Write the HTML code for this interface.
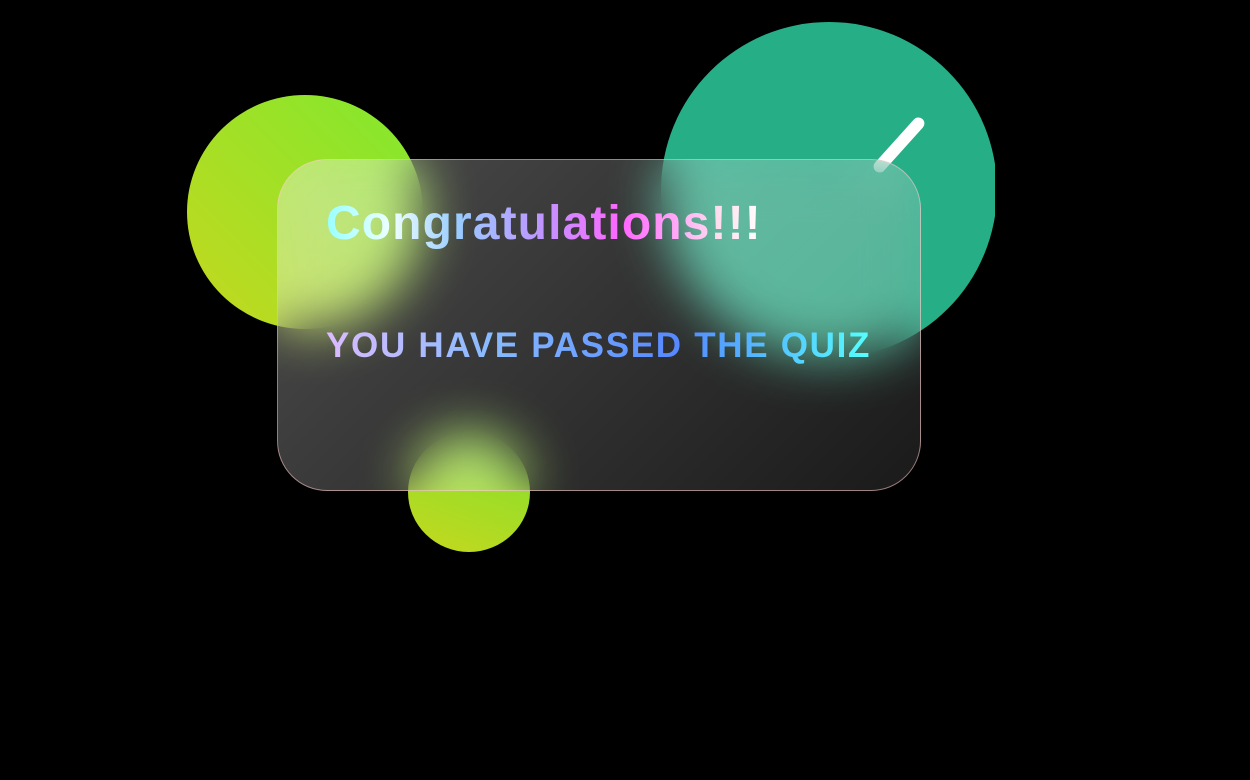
<!DOCTYPE html>
<html><head><style>
html,body{margin:0;padding:0;background:#000;width:1250px;height:780px;overflow:hidden;position:relative;font-family:"Liberation Sans",sans-serif}
.c{position:absolute;border-radius:50%}
.g1{left:187px;top:95px;width:236px;height:234px;background:linear-gradient(45deg,#c5d81e,#80e82e)}
.g2{left:408px;top:432px;width:122px;height:120px;background:linear-gradient(20deg,#c5d81e,#7fe02e)}
.clip{position:absolute;left:0;top:0;width:995px;height:780px;overflow:hidden}
.t{left:661px;top:22px;width:336px;height:336px;background:#26ae87}
.chk{position:absolute;left:893px;top:110px;width:12px;height:70px;background:#fff;border-radius:6px;transform:rotate(42deg);transform-origin:center}
.card{position:absolute;left:277px;top:159px;width:644px;height:332px;border-radius:50px;background:linear-gradient(135deg,rgba(255,255,255,.3),rgba(255,255,255,.22) 40%,rgba(255,255,255,.1));backdrop-filter:blur(26px) saturate(0.8);-webkit-backdrop-filter:blur(26px) saturate(0.8);border:1px solid rgba(255,200,200,.55);box-sizing:border-box}
.h1{position:absolute;left:326px;top:196px;font-size:48px;font-weight:bold;letter-spacing:1.1px;background:linear-gradient(90deg,#9ff 0%,#eff 15%,#9cf 30%,#b9f 48%,#f6f 68%,#fde 90%,#fff 100%);-webkit-background-clip:text;background-clip:text;color:transparent;white-space:nowrap}
.h2{position:absolute;left:326px;top:326px;font-size:35px;font-weight:bold;letter-spacing:1.7px;background:linear-gradient(90deg,#dbf 0%,#8bf 30%,#58f 65%,#5ff 100%);-webkit-background-clip:text;background-clip:text;color:transparent;white-space:nowrap}
</style></head><body>
<div class="c g1"></div>
<div class="c g2"></div>
<div class="clip"><div class="c t"></div><div class="chk"></div></div>
<div class="card"></div>
<div class="h1">Congratulations!!!</div>
<div class="h2">YOU HAVE PASSED THE QUIZ</div>
</body></html>
